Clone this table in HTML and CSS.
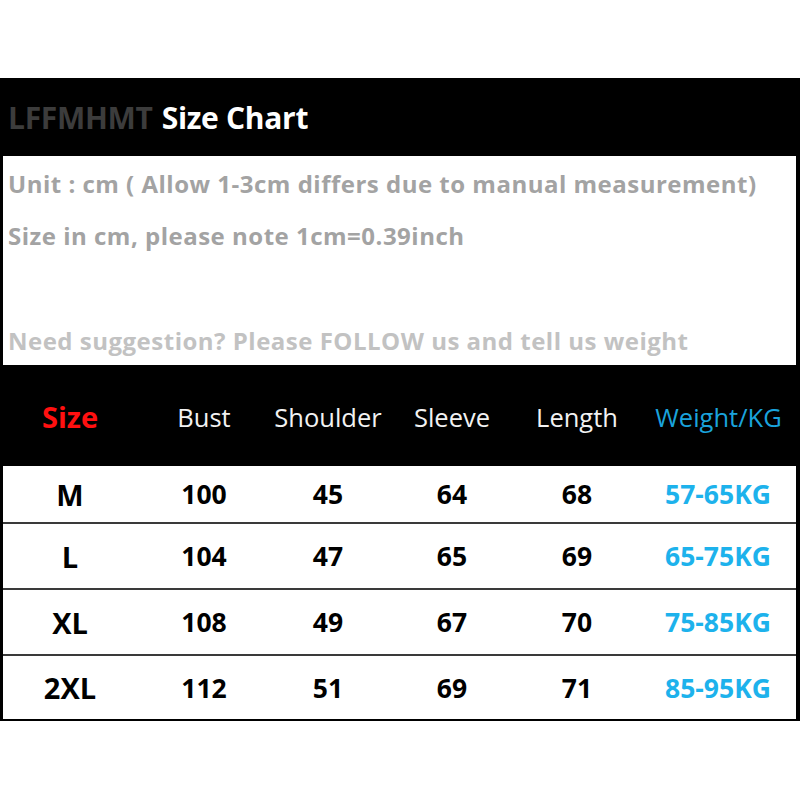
FILE: index.html
```html
<!DOCTYPE html>
<html>
<head>
<meta charset="utf-8">
<link rel="stylesheet" href="styles.css">
</head>
<body>
<div class="chart">
  <div class="title"><span class="brand">LFFMHMT</span><span class="name">Size Chart</span></div>
  <div class="info">
    <div class="line l1">Unit : cm ( Allow 1-3cm differs due to manual measurement)</div>
    <div class="line l2">Size in cm, please note 1cm=0.39inch</div>
    <div class="line l3">Need suggestion? Please FOLLOW us and tell us weight</div>
  </div>
  <div class="head">
    <div class="c size">Size</div>
    <div class="c">Bust</div>
    <div class="c">Shoulder</div>
    <div class="c">Sleeve</div>
    <div class="c">Length</div>
    <div class="c kg">Weight/KG</div>
  </div>
  <div class="row r1">
    <div class="c sz">M</div><div class="c">100</div><div class="c">45</div><div class="c">64</div><div class="c">68</div><div class="c kg">57-65KG</div>
  </div>
  <div class="row">
    <div class="c sz">L</div><div class="c">104</div><div class="c">47</div><div class="c">65</div><div class="c">69</div><div class="c kg">65-75KG</div>
  </div>
  <div class="row">
    <div class="c sz">XL</div><div class="c">108</div><div class="c">49</div><div class="c">67</div><div class="c">70</div><div class="c kg">75-85KG</div>
  </div>
  <div class="row last">
    <div class="c sz">2XL</div><div class="c">112</div><div class="c">51</div><div class="c">69</div><div class="c">71</div><div class="c kg">85-95KG</div>
  </div>
</div>
</body>
</html>
```
FILE: styles.css
```css
html, body {
  margin: 0;
  padding: 0;
  background: #fff;
}
body {
  font-family: "Open Sans", "Noto Sans", sans-serif;
}
.chart {
  margin-top: 78px;
  width: 800px;
  background: #000;
  padding: 0 4px 2px 3px;
  box-sizing: border-box;
}
.title {
  height: 78px;
  display: flex;
  align-items: center;
  padding-left: 5px;
  font-weight: 700;
  font-size: 30px;
  letter-spacing: -0.3px;
  white-space: nowrap;
}
.brand { color: #3c3c3c; margin-right: 9px; }
.name { color: #fff; }
.info {
  background: #fff;
  height: 209px;
  padding-left: 5px;
  font-weight: 700;
  font-size: 24px;
  letter-spacing: 0.5px;
  color: #a3a3a3;
  display: flex;
  flex-direction: column;
}
.line { height: 30px; line-height: 30px; white-space: nowrap; }
.l1 { margin-top: 13px; }
.l2 { margin-top: 22px; }
.l3 { margin-top: 75px; color: #c2c2c2; }
.head, .row {
  display: grid;
  grid-template-columns: 134px 134px 114px 134px 116px 161px;
  align-items: center;
  text-align: center;
}
.head {
  height: 101px;
  color: #f2f2f2;
  font-size: 25.5px;
  letter-spacing: 0;
  white-space: nowrap;
}
.head .c { margin-top: 2px; }
.head .size { color: #ff1010; font-weight: 700; font-size: 29px; }
.head .kg { color: #1aa3dc; padding-left: 6px; }
.row {
  background: #fff;
  height: 64px;
  border-top: 2px solid #3a3a3a;
  font-weight: 700;
  font-size: 26.5px;
  color: #000;
  letter-spacing: 0;
}
.row.r1 { height: 56px; border-top: 0; }
.row.last { height: 63px; }
.row .sz { font-size: 29px; }
.row .kg { color: #1db2ec; padding-left: 5px; }
```
